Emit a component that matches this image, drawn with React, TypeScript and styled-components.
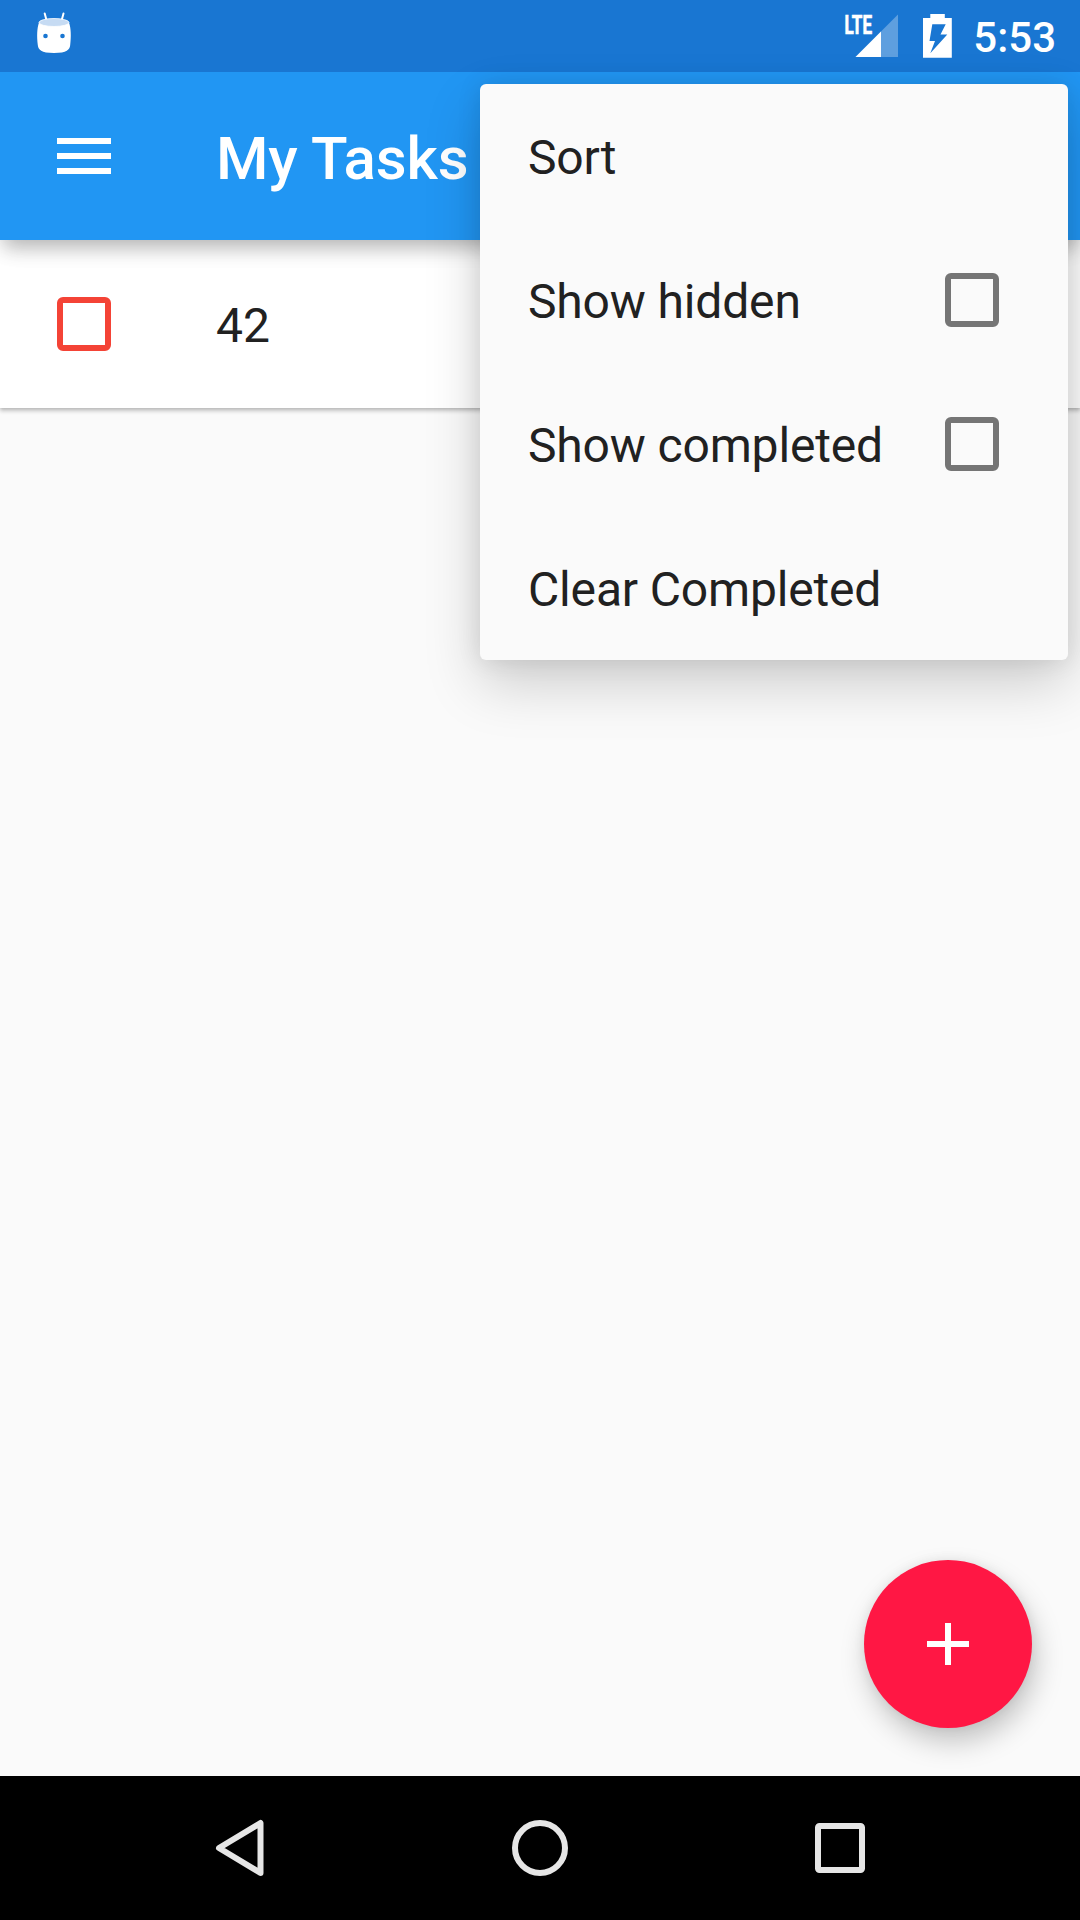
import React from "react";
import styled, { createGlobalStyle } from "styled-components";

const Global = createGlobalStyle`
  *, *::before, *::after { box-sizing: border-box; }
  html, body { margin: 0; padding: 0; }
  body { font-family: Roboto, "Noto Sans", sans-serif; background: #fafafa; overflow: hidden; }
`;

const Screen = styled.div`
  position: relative;
  display: flex;
  flex-direction: column;
  width: 1080px;
  height: 1920px;
  background: #fafafa;
  overflow: hidden;
`;

const StatusBar = styled.header`
  display: flex;
  align-items: flex-start;
  height: 72px;
  padding: 0 24px 0 36px;
  background: #1976d2;
  z-index: 2;
`;

const Spacer = styled.div`
  flex: 1;
`;

const Clock = styled.time`
  margin-left: 21px;
  font-size: 42px;
  font-weight: 500;
  line-height: 72px;
  padding-top: 2px;
  color: #fff;
`;

const Toolbar = styled.div`
  display: flex;
  align-items: center;
  height: 168px;
  padding-left: 57px;
  background: #2196f3;
  box-shadow: 0 12px 18px -4px rgba(0, 0, 0, 0.24), 0 0 30px rgba(0, 0, 0, 0.1);
  z-index: 1;
`;

const Title = styled.h1`
  margin: 5px 0 0 105px;
  font-size: 60px;
  font-weight: 500;
  line-height: 70px;
  letter-spacing: -0.12px;
  color: #fff;
`;

const TaskRow = styled.div`
  display: flex;
  align-items: center;
  height: 168px;
  padding-left: 57px;
  background: #fff;
  box-shadow: 0 3px 4px rgba(0, 0, 0, 0.22), 0 0 3px rgba(0, 0, 0, 0.12);
`;

const TaskName = styled.span`
  margin: 4px 0 0 105px;
  font-size: 48px;
  line-height: 56px;
  color: #212121;
`;

const Checkbox = styled.span<{ $color: string }>`
  flex: none;
  width: 54px;
  height: 54px;
  border: 6px solid ${(p) => p.$color};
  border-radius: 6px;
`;

const Content = styled.main`
  flex: 1;
`;

const Menu = styled.div`
  position: absolute;
  top: 84px;
  left: 480px;
  width: 588px;
  border-radius: 6px;
  background: #fafafa;
  box-shadow: 0 24px 56px rgba(0, 0, 0, 0.18), 0 0 24px rgba(0, 0, 0, 0.1);
  z-index: 3;
`;

const MenuItem = styled.div`
  display: flex;
  align-items: center;
  justify-content: space-between;
  height: 144px;
  padding: 0 69px 0 48px;
`;

const MenuLabel = styled.span`
  padding-top: 4px;
  font-size: 48px;
  line-height: 56px;
  letter-spacing: -0.16px;
  white-space: nowrap;
  color: #212121;
`;

const Fab = styled.button`
  position: absolute;
  right: 48px;
  bottom: 192px;
  display: flex;
  align-items: center;
  justify-content: center;
  width: 168px;
  height: 168px;
  padding: 0;
  border: 0;
  border-radius: 50%;
  background: #ff1744;
  box-shadow: 4px 14px 28px rgba(0, 0, 0, 0.22), 0 0 12px rgba(0, 0, 0, 0.07);
`;

const NavBar = styled.nav`
  display: flex;
  align-items: flex-start;
  justify-content: center;
  gap: 220px;
  height: 144px;
  padding-top: 24px;
  background: #000;
  z-index: 2;
`;

const Icon = styled.svg`
  display: block;
  flex: none;
`;

const RobotIcon = () => (
  <Icon width="36" height="72" viewBox="36 0 36 72">
    <path d="M44.7 13.5 47 22M63.5 13.5 61.2 22" stroke="#fff" strokeWidth="2" strokeLinecap="round" />
    <path d="M39 22.5C37 28 36.7 36 37.8 45c.5 4.500 3.200 8 16.200 8s15.700-3.500 16.200-8c1.100-9 .8-17-1.200-22.500z" fill="#fff" />
    <ellipse cx="54" cy="22.500" rx="15" ry="4" fill="#c6dbf3" stroke="#fff" strokeWidth=".8" />
    <circle cx="45.500" cy="36" r="2.300" fill="#1976d2" />
    <circle cx="62.500" cy="36" r="2.300" fill="#1976d2" />
  </Icon>
);

const SignalIcon = () => (
  <Icon width="54" height="72" viewBox="844 0 54 72">
    <path d="M898 14.500V57h-42.500z" fill="#fff" fillOpacity=".3" />
    <path d="M881 31.500V57h-25.500z" fill="#fff" />
    <text
      x="844.500"
      y="33.500"
      fontFamily="Roboto, sans-serif"
      fontSize="26"
      fontWeight="700"
      textLength="27.500"
      lengthAdjust="spacingAndGlyphs"
      fill="#fff"
      stroke="#fff"
      strokeWidth=".7"
    >
      LTE
    </text>
  </Icon>
);

const Battery = styled(Icon)`
  margin-left: 25px;
`;

const BatteryIcon = () => (
  <Battery width="29" height="72" viewBox="923 0 29 72">
    <path
      fillRule="evenodd"
      d="M930.300 14h14.500v4h7v39.700H923V18h7.300zM932.300 24.300 929.500 41H935L930.300 53.300 947.300 34.500H940.500L945.700 24.300z"
      fill="#fff"
    />
  </Battery>
);

const entries = [
  { label: "Sort", checkable: false },
  { label: "Show hidden", checkable: true },
  { label: "Show completed", checkable: true },
  { label: "Clear Completed", checkable: false },
];

export default function App() {
  return (
    <>
      <Global />
      <Screen>
        <StatusBar>
          <RobotIcon />
          <Spacer />
          <SignalIcon />
          <BatteryIcon />
          <Clock>5:53</Clock>
        </StatusBar>
        <Toolbar>
          <Icon width="54" height="36" viewBox="0 0 54 36">
            <path d="M0 0h54v6H0zM0 15h54v6H0zM0 30h54v6H0z" fill="#fff" />
          </Icon>
          <Title>My Tasks</Title>
        </Toolbar>
        <TaskRow>
          <Checkbox $color="#f44336" />
          <TaskName>42</TaskName>
        </TaskRow>
        <Content />
        <NavBar>
          <Icon width="80" height="90" viewBox="0 0 80 90">
            <path d="M60.500 23V73L19 48z" fill="none" stroke="#e6e6e6" strokeWidth="6" strokeLinejoin="round" />
          </Icon>
          <Icon width="80" height="90" viewBox="0 0 80 90">
            <circle cx="40" cy="48" r="25" fill="none" stroke="#e6e6e6" strokeWidth="6" />
          </Icon>
          <Icon width="80" height="90" viewBox="0 0 80 90">
            <rect x="18" y="26" width="44" height="44" rx="1.500" fill="none" stroke="#e6e6e6" strokeWidth="6" />
          </Icon>
        </NavBar>
        <Fab aria-label="Add task">
          <Icon width="42" height="42" viewBox="0 0 42 42">
            <path d="M18 0h6v18h18v6H24v18h-6V24H0v-6h18z" fill="#fff" />
          </Icon>
        </Fab>
        <Menu>
          {entries.map((e) => (
            <MenuItem key={e.label}>
              <MenuLabel>{e.label}</MenuLabel>
              {e.checkable && <Checkbox $color="#757575" />}
            </MenuItem>
          ))}
        </Menu>
      </Screen>
    </>
  );
}
